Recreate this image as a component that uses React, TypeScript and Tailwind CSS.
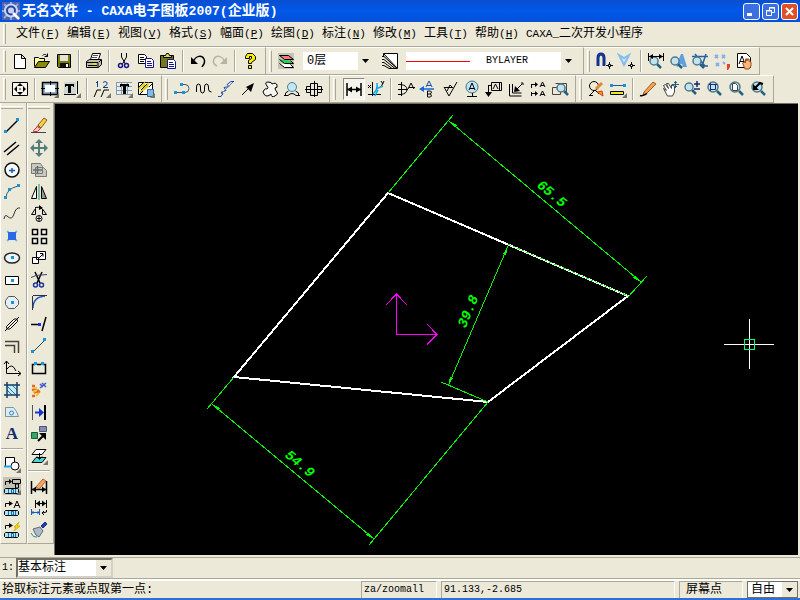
import React from "react";

type StrokeProps = { d: string; c?: string; f?: string; w?: number };

const P: React.FC<StrokeProps> = ({ d, c = "#000", f = "none", w = 1 }) => (
  <path d={d} stroke={c} fill={f} strokeWidth={w} />
);

const Lens: React.FC<{ x?: number; y?: number; r?: number }> = ({ x = 8, y = 7, r = 5 }) => (
  <>
    <path d={`M${x + r - 1} ${y + r - 1}l4 4`} stroke="#246080" strokeWidth="2.5" />
    <circle cx={x} cy={y} r={r} fill="#c3e4ee" stroke="#52798a" strokeWidth="1.5" />
  </>
);

const Corner = () => <path d="M18 13v5h-5z" fill="#77766c" />;

const Dots: React.FC<{ at: number[][] }> = ({ at }) => (
  <>
    {at.map(([x, y]) => (
      <rect key={`${x}-${y}`} x={x} y={y} width="3" height="3" fill="#1495df" />
    ))}
  </>
);

const BlockTag = () => (
  <>
    <P d="M2.5 11.5h12l1 1v3l-1 1h-12l-1-1v-3z" f="#a9e3fa" />
    <P d="M5.5 12v4M8.5 12v4h2v-3.5h-2M12.5 12v4" c="#1172a4" />
  </>
);

const icons: Record<string, React.ReactNode> = {
  // standard
  new: <P d="M3.5 2.5h7l4 4v10h-11zM10.5 2.5v4h4" f="#fff" />,
  open: (
    <>
      <P d="M1.5 14.5v-9h4l1 1h5v3" f="#ffffa0" />
      <P d="M1.5 15.5l4-6h11l-4 6z" f="#8c8a00" />
      <P d="M9.5 3.5c2-2 4-1 5 1m0-3v3h-3" />
    </>
  ),
  save: (
    <>
      <P d="M2.5 2.5h13v13h-12l-1-1z" f="#777a10" />
      <path d="M5 3h8v6H5z" fill="#e5e4d3" />
      <path d="M5 11h9v4H5z" fill="#111" />
      <path d="M11 12h2v3h-2z" fill="#fff" />
    </>
  ),
  print: (
    <>
      <P d="M5.5 7.5l2-6h8l-2 6" f="#fff" />
      <P d="M8 3.5h5M7 5.5h5" c="#555" />
      <P d="M1.5 9.5l3-2h12v5l-3 3h-12z" f="#bdbdad" />
      <P d="M2 10.5h11v5M3 13.5h9M14 10l2-2" />
      <path d="M8 11h3v2H8z" fill="#e9e900" />
    </>
  ),
  cut: (
    <>
      <P d="M6.5 1v4l4 7M11.5 1v4l-4 7" />
      <circle cx="5.5" cy="13.5" r="2" fill="none" stroke="#15158c" strokeWidth="1.5" />
      <circle cx="11.5" cy="13.5" r="2" fill="none" stroke="#15158c" strokeWidth="1.5" />
    </>
  ),
  copy: (
    <>
      <P d="M1.5 2.5h6l2 2v7h-8z" f="#fff" />
      <P d="M3 5.5h4M3 7.5h5M3 9.5h4" />
      <P d="M8.5 6.5h6l2 2v7h-8z" f="#fff" c="#15158c" />
      <P d="M10 9.5h4M10 11.5h5M10 13.5h5" c="#15158c" />
    </>
  ),
  paste: (
    <>
      <P d="M1.5 3.5h13v12h-13z" f="#77761a" />
      <P d="M4.5 5.5v-2h2l1-2h2l1 2h2v2z" f="#d9d85b" />
      <P d="M8.5 7.5h6l2 2v7h-8z" f="#fff" c="#15158c" />
      <P d="M10 10.5h4M10 12.5h5M10 14.5h5" c="#15158c" />
    </>
  ),
  undo: (
    <>
      <path d="M2 5v7h7z" />
      <P d="M4 10c3-7 9-7 11-3s-1 6-2 8" w={1.5} />
    </>
  ),
  redo: (
    <>
      <path d="M16 5v7H9z" fill="#b5b3a6" />
      <P d="M14 10C11 3 5 3 3 7s1 6 3 7" c="#b5b3a6" w={1.5} />
    </>
  ),
  help: (
    <>
      <P d="M4.5 6.5v-2l2-3h5l3 3v3l-4 3v1h-3v-3l3-2v-2h-2v2z" f="#fff000" />
      <P d="M7.5 13.5h3v3h-3z" f="#fff000" />
    </>
  ),
  layers: (
    <>
      <path d="M1 1h16v16H1z" fill="#c5c3b6" />
      <P d="M2.5 3.5h9l5 4h-9z" f="#fb7878" />
      <P d="M2.5 7.5l5 4h9l-3-3" f="#21d24a" />
      <P d="M2.5 11.5l5 4h9l-3-3" f="#fff" />
    </>
  ),
  lineStyle: (
    <>
      <P d="M2.5 1.5h14v15z" f="#fff" />
      <P d="M1 4.5h2l13 12M1 7.5h2l11 9M1 10.5h2l8 6M1 13.5h2l5 3h8M2.5 2v3" />
    </>
  ),
  magnet: (
    <>
      <P d="M3 14V6q0-4 3-4t3 4v8" c="#12348f" w={3} />
      <P d="M11 13.5h7M14.5 10v7" />
      <P d="M13.5 12.5h2v2h-2z" f="#fff" />
    </>
  ),
  snapPoint: (
    <>
      <P d="M2 3l5 10 5-10-5 3z" c="#86bdec" f="#c8e7ff" w={2} />
      <P d="M11 13.5h7M14.5 10v7" />
      <P d="M13.5 12.5h2v2h-2z" f="#fff" />
    </>
  ),
  dimQuery: (
    <>
      <Lens x={7} y={9} r={4} />
      <P d="M1.5 1v8M16.5 1v8M2 4.5h14" />
      <path d="M2 4.5l4-2.5v5zM16 4.5l-4-2.5v5z" />
    </>
  ),
  textQuery: (
    <>
      <path d="M7 14l5-12h2l4 13h-4l-1-3h-3l-1 3z" fill="#5f9fe2" />
      <Lens x={6} y={9} r={4} />
    </>
  ),
  symbolQuery: (
    <>
      <P d="M1 4.5h16M4 2l10 12M15 2l-4 12h6" c="#2461a5" w={1.5} />
      <Lens x={6} y={9} r={4} />
    </>
  ),
  points: (
    <>
      <P d="M2 3l3 3M5 3L2 6M9 3l3 3M12 3L9 6M3 11l3 3M6 11l-3 3M10 10l2 2" c="#85aeea" w={2} />
      <path d="M14 12h3v3l-2 3h-1z" fill="#e74322" />
    </>
  ),
  handPage: (
    <>
      <P d="M2.5 1.5h9l4 4v10h-13z" f="#fff" />
      <P d="M4 12L7 4l3 8M5 9.5h4" />
      <P d="M7.5 11l2-1 1 1v-4h1.5v2V7h2v2l2 1v4l-2 3h-4z" c="#9d4b18" f="#fab779" />
    </>
  ),
  // sheet
  frameMove: (
    <>
      <P d="M1.5 2.5h15v13h-15z" f="#f5f5ed" />
      <path d="M9 3l3 3H6zM9 15l3-3H6zM3 9l3-3v6zM15 9l-3-3v6z" />
      <path d="M8 8h2v2H8z" fill="#888" />
    </>
  ),
  frame: (
    <>
      <P d="M1.5 2.5h15v12h-15z" f="#8fb0cf" w={1.5} />
      <path d="M4 5h10v7H4z" fill="#fff" />
      <P d="M9.5 1v4M9.5 12v4M0 8.5h4M14 8.5h4" />
      <Corner />
    </>
  ),
  textFrame: (
    <>
      <path d="M1 2h12v12H1z" fill="#cdd6d5" />
      <path d="M2 4h9v3h-1V6H8v7H5V6H3v1H2z" />
      <P d="M1 14.5h12M14.5 1v13" />
      <Corner />
    </>
  ),
  serial: (
    <>
      <P d="M2 15l2-5h4M9 15l2-5h5M2 15l-1 2M9 15l-1 2" />
      <P d="M4.5 1v6M3 2.5h1M10 2.5l2-1 2 1v2l-4 3h5" c="#10408a" />
      <Corner />
    </>
  ),
  table: (
    <>
      <path d="M1 2h16v13H1z" fill="#e8edf0" />
      <P d="M1 2.5h16M1 6.5h16M1 10.5h16M1 14.5h16M1.5 2v13M6.5 2v13M12.5 2v13" c="#8a9ba3" />
      <path d="M5 4h9v3h-1V6h-2v8H8V6H6v1H5z" />
      <Corner />
    </>
  ),
  library: (
    <>
      <P d="M1.5 2.5h14v12h-14z" f="#fff" />
      <P d="M2 9l5-5v4l5-5M3 12l9-6" c="#e4d020" w={2} />
      <P d="M2 7l4-4M4 10l6-6M3 14l3-3M12 7l3-3" />
      <P d="M10.5 9.5h6v7h-6z" c="#2466a4" f="#88b9e3" />
      <Corner />
    </>
  ),
  // drawing, advanced
  pline: (
    <>
      <P d="M2 12.5h9M9 4.5h3q4 0 4 4t-4 4" c="#3a5c6a" />
      <Dots at={[[1, 11], [7, 3], [9, 11]]} />
    </>
  ),
  wave: <P d="M1.5 12V7q0-3 2-3t2 3v3q0 3 2 3t2-3V7q0-3 2-3t2 3v2q0 3 3 3" />,
  breakLine: (
    <>
      <P d="M1 16.5h3l2-3-2-1 5-2-2-3 5-1-2-2 4-3h3" c="#1746b4" />
      <P d="M4 14l12-12" c="#6b7aa8" />
    </>
  ),
  arrow: (
    <>
      <P d="M3 15l8-8" />
      <path d="M15 3l-3 9-5-5z" />
    </>
  ),
  gear: (
    <P
      d="M6 6Q3 2 7 2t4 2q4-2 5 1t-2 3q0 2 2 4t-2 4-4-2q-2 2-4 2t-3-2q-2-2 0-4t3-1q2-1 0-3z"
      f="#f5f5ed"
    />
  ),
  circleBase: (
    <>
      <circle cx="9" cy="7" r="4.5" fill="#c1e6f4" stroke="#438199" />
      <P d="M2.5 16v-3l3-2M15.5 16v-3l-3-2M1 15.5h4q4-4 8 0h4" />
    </>
  ),
  hole: <P d="M0 9.5h18M5.5 3.5h7v12h-7zM1.5 6.5h4v6h-4zM12.5 6.5h4v6h-4zM9.5 1v16" />,
  // dimension
  dim: (
    <>
      <P d="M2 3v13M16 3v13M2 9.5h14" w={1.5} />
      <path d="M2 9.5l5-3v6zM16 9.5l-5-3v6z" />
    </>
  ),
  coordDim: (
    <>
      <P d="M5.5 2v14M1 14.5h13M1 5l3 3M4 5L1 8M14 1l2 3M17 1l-3 6" />
      <P d="M6 14q5-4 4-11M9 9l7-3M8 16l3-6" c="#16a7e6" w={1.5} />
    </>
  ),
  chamfer: <P d="M4.5 2v14M1 4.5h3q6 1 6 5t-6 5H1M1 9.5h10M11 9l3-6 3 6M12 7.5h6" />,
  datum: (
    <>
      <P d="M4 9h11" c="#1466e5" w={1.5} />
      <path d="M0 9l5-3v6z" fill="#1466e5" />
      <P d="M7 7l3-6 3 6M8 5.5h4" c="#1552a5" />
      <P d="M8.5 11v6h3l1-1-1-2h-3M11.5 14l1-2-1-1h-3" />
    </>
  ),
  rough: <P d="M3 7.5h9M3 7l5 9L16 2M6 11l3-6 3 3" />,
  weld: (
    <>
      <circle cx="9" cy="7" r="6" fill="#c3e4ee" stroke="#3a7994" />
      <P d="M6 10l3-7 3 7M7 8.5h4M9.5 13v3M4 16.5h10" />
    </>
  ),
  refBox: (
    <>
      <P d="M6.5 2.5h10v8h-10zM14.5 2.5v8M8 9l2.5-5L13 9M3.5 5.5v8M3 5.5h3" />
      <path d="M0 12h7l-3.5 5z" />
    </>
  ),
  edge: (
    <>
      <P d="M2.5 4v12h12M5.5 4v9h9M9 10l6-6h2M15 4V2" />
      <path d="M7 12l1-6 5 5z" />
    </>
  ),
  cutView: (
    <>
      <P d="M2.5 4v4M2 4.5h5M2.5 12v4M2 13.5h5M11 7l2.5-5L16 7M11 16l2.5-5 2.5 5M12 5.5h3M12 14.5h3" />
      <path d="M6 2v5l3-2.5zM6 11v5l3-2.5z" />
    </>
  ),
  boxQuery: (
    <>
      <P d="M1.5 7.5h8v7h-8zM4.5 3.5h11v9" c="#444" />
      <Lens x={10} y={8} r={4} />
    </>
  ),
  // view
  edit: (
    <>
      <circle cx="7" cy="6" r="4.5" fill="#f4ecd4" stroke="#000" />
      <P d="M9 9l6-6" c="#de8a36" w={3} />
      <P d="M3 15l5-5 4 4M2 15.5h4" />
      <P d="M10 12l6 4-1-5z" c="#d03914" f="#f5a022" />
    </>
  ),
  ruler: (
    <>
      <P d="M4 5.5h10" c="#185ab1" />
      <Dots at={[[1, 4], [14, 4]]} />
      <P d="M1.5 11.5h13v3h-13z" f="#efe72c" />
      <Corner />
    </>
  ),
  pencil: (
    <>
      <P d="M5 12L14 2l3 2-9 9-4 2z" c="#a05a20" f="#f3a553" />
      <P d="M1 15.5q3 1 7-2" w={1.5} />
    </>
  ),
  pan: (
    <>
      <P d="M2.5 8.5l3 2-3-5 2-1 3 4-2-5h2l3 5V5l3 1v6l-2 4h-5z" f="#fff" c="#444" />
      <P d="M11 4.5h7M14.5 1v7M13 2.5h3M13 6.5h3" c="#225b83" />
    </>
  ),
  zoomPlus: (
    <>
      <Lens x={6} y={7} r={4} />
      <P d="M11 4h6M14 1v6M11 9h6" c="#172870" w={1.5} />
    </>
  ),
  zoomWindow: (
    <>
      <Lens />
      <P d="M5.5 4.5h5v5h-5zM4 4.5h8M5.5 3v8" c="#182b83" />
    </>
  ),
  zoomPage: (
    <>
      <Lens />
      <P d="M5.5 3.5h3l2 2v5h-5z" f="#fff" c="#444" />
    </>
  ),
  zoomBack: (
    <>
      <Lens />
      <P d="M6 8l5-5 3 1" w={2} />
      <path d="M4 4v6h6z" />
    </>
  ),
  // drawing
  line: (
    <>
      <P d="M3 15L15 3" w={1.5} />
      <Dots at={[[1, 13], [13, 1]]} />
    </>
  ),
  parallel: <P d="M1 13L13 3M4 16L16 6" w={1.5} />,
  circle: (
    <>
      <circle cx="9" cy="9" r="7" fill="#f5faff" stroke="#111" strokeWidth="1.5" />
      <P d="M6 9.5h6M9 7v5" c="#225aae" w={1.5} />
    </>
  ),
  arc: (
    <>
      <P d="M3 15q0-9 12-12" c="#405a70" />
      <Dots at={[[1, 13], [5, 5], [14, 1]]} />
    </>
  ),
  spline: <P d="M1 14q1-5 3-3 5 5 7-2t6-6" c="#333" />,
  point: (
    <>
      <P d="M4 4l10 10M14 4L4 14" c="#6db9f5" w={2} />
      <path d="M5 5h8v8H5z" fill="#2a6be3" />
    </>
  ),
  ellipse: (
    <>
      <ellipse cx="9" cy="9" rx="7.5" ry="5" fill="#edf5fa" stroke="#222" strokeWidth="1.5" />
      <Dots at={[[8, 7]]} />
    </>
  ),
  rect: (
    <>
      <P d="M2.5 5.5h13v8h-13z" f="#fff" />
      <Dots at={[[8, 8]]} />
    </>
  ),
  polygon: (
    <>
      <P d="M5.5 3.5h6l4 4v4l-4 4h-6l-3-4v-4z" f="#e7edf0" c="#4b5b65" />
      <Dots at={[[8, 8]]} />
    </>
  ),
  slot: (
    <>
      <P d="M3.5 11.5l7-7q4-2 4 2l-7 7q-4 2-4-2z" f="#f3f2ea" />
      <P d="M2 16L16 2" />
    </>
  ),
  offset: <P d="M2 4.5h13.5V16M2 8.5h9.5V16" c="#45443e" w={1.5} />,
  curve: <P d="M3.5 2v12.5h14M1 5l2.5-3L6 5M15 12l3 2.500-3 2.500M4 10q5-7 9 2" />,
  hatch: (
    <>
      <path d="M3 3h12v12H3z" fill="#c6e9f4" />
      <P d="M4 9l5 5M4 5l9 9M9 4l5 5" c="#1d78ac" />
      <P d="M4 1v16M14 1v16M1 4h16M1 14h16" c="#173c63" w={1.5} />
    </>
  ),
  region: (
    <>
      <P d="M2.5 4.5h8l3 4 2 5h-13z" f="#dfebf0" c="#7995a0" />
      <circle cx="8.5" cy="10" r="2" fill="none" stroke="#218dc0" />
    </>
  ),
  text: (
    <text x="9" y="14" textAnchor="middle" className="font-['Liberation_Serif',serif] text-[17px] leading-4 font-bold" fill="#15296b">
      A
    </text>
  ),
  block: (
    <>
      <P d="M2.5 2.5h9v9h-9z" f="#fff" />
      <circle cx="12" cy="11" r="4" fill="#fff" stroke="#000" />
      <P d="M1 11.5h8" c="#19a5e6" w={2} />
      <Corner />
    </>
  ),
  sheetBlock: (
    <>
      <path d="M0 0h18v18H0z" fill="#c5c3b6" />
      <P d="M2.5 8V4.5h5M9.5 2.5h8v4h-8zM12.5 7h3v4h-3z" />
      <path d="M6 2l3 2.5L6 7z" />
      <BlockTag />
      <Corner />
    </>
  ),
  textBlock: (
    <>
      <P d="M2.5 8V4.5h5M11 9l3-7 3 7M12 6.5h4" />
      <path d="M6 2l4 2.5L6 7z" />
      <BlockTag />
    </>
  ),
  flashBlock: (
    <>
      <P d="M2.5 8V4.5h5" />
      <path d="M6 2l4 2.5L6 7z" />
      <path d="M16 1l-5 5h2l-2 4 6-5h-3z" fill="#f4df14" stroke="#d8b406" />
      <BlockTag />
    </>
  ),
  // modify
  erase: (
    <>
      <P d="M8 8l6-7 3 2-6 8z" f="#f6ce47" c="#8b5b20" />
      <P d="M7 9l3 3" c="#4a6bb0" w={2} />
      <P d="M3.5 13.5l4-4 3 2-3 3h-4z" f="#f9c5bd" c="#c33" />
      <P d="M1 15.5h15" c="#444" />
    </>
  ),
  move: (
    <>
      <P d="M2 9h14M9 2v14" c="#527f7d" w={2} />
      <path d="M9 0l4 4H5zM9 18l4-4H5zM0 9l4-4v8zM18 9l-4-4v8z" fill="#527f7d" />
    </>
  ),
  duplicate: (
    <>
      <P d="M1.5 2.5h9l2 3v7h-11zM5.5 6.5h8l3 3v6h-11z" c="#7b7b75" f="#cac9c0" />
      <P d="M3 9h9M7.5 5v8" c="#5e716d" w={1.5} />
    </>
  ),
  mirror: (
    <>
      <P d="M1.5 15.5h5v-12z" f="#fff" />
      <P d="M16.5 15.5h-5v-12z" f="#999" />
      <P d="M9 1v16" c="#16956c" />
    </>
  ),
  rotate: (
    <>
      <circle cx="9" cy="13.5" r="3" fill="#fff" stroke="#000" />
      <P d="M7 13.5h4M9 11v5M1.5 9.5h4v-6zM12.5 4l4 5.5h-4zM5 2.5q4-1 7 1" />
      <path d="M9 0l4 3-4 2z" />
    </>
  ),
  array: <P d="M2.5 2.5h5v5h-5zM11.5 2.5h5v5h-5zM2.5 11.5h5v5h-5zM11.5 11.5h5v5h-5z" f="#f7f6ee" w={1.5} />,
  scale: (
    <>
      <P d="M6.5 2.5h9v8h-9zM2.5 8.5h6v6h-6z" f="#fff" />
      <P d="M9 9l4-4M10 4.5h3v3" />
    </>
  ),
  trim: (
    <>
      <P d="M5 1l5 11M12 1L7 12" w={1.5} />
      <P d="M1 6.5l5-2 11-1" c="#446" />
      <circle cx="5.5" cy="14" r="2" fill="none" stroke="#1c379d" strokeWidth="1.5" />
      <circle cx="11.5" cy="14" r="2" fill="none" stroke="#1c379d" strokeWidth="1.5" />
    </>
  ),
  fillet: (
    <>
      <P d="M3 15q0-11 12-12" c="#1f58c6" w={1.5} />
      <P d="M2.5 3v14M3 2.5h14" c="#333" />
    </>
  ),
  extend: (
    <>
      <P d="M1 9.5h8M12 16l4-14" w={1.5} />
      <path d="M8 8h3v3H8z" fill="#1c35e0" />
    </>
  ),
  stretchLine: (
    <>
      <P d="M3 15L15 3" c="#244c49" />
      <Dots at={[[1, 13], [13, 1]]} />
    </>
  ),
  breakAt: (
    <>
      <P d="M5 5.5H2.5v9h13v-9H13M7 5.5h4" w={1.5} />
      <Dots at={[[4, 3], [11, 3]]} />
    </>
  ),
  explode: (
    <>
      <P d="M2 5h3M2 9l5-1M4 12l5-3M2 15h3M7 12l3-2" c="#e26b24" w={2.5} />
      <P d="M4 7h3M3 11l4-2M6 15l3-3" c="#f1c233" w={2} />
      <P d="M10 7l6-5M12 2l4 4M10 3l3 3" c="#3f5cce" w={1.5} />
    </>
  ),
  align: (
    <>
      <P d="M2.5 2v15" c="#555" />
      <P d="M15 2v15" w={2} />
      <P d="M5 9.5h5" c="#1636d1" w={2} />
      <path d="M9 5l5 4.5-5 4.5z" fill="#1636d1" />
    </>
  ),
  convert: (
    <>
      <P d="M9.5 1.5h7v5h-7z" c="#556" f="#808eb9" />
      <P d="M1.5 7.5h6v6h-6z" c="#185c3c" f="#35a56c" />
      <P d="M8 16l5-5" w={2} />
      <path d="M16 8v7l-7-7z" />
    </>
  ),
  layerCopy: (
    <>
      <P d="M6 2.5h10l-4 5H2z" f="#fff" />
      <P d="M6 10.5h10l-4 5H2z" f="#48d7dc" />
      <P d="M9.5 6v6M7 9.5l2.5 3 2.5-3" />
      <Corner />
    </>
  ),
  dimEdit: (
    <>
      <P d="M1.5 4v13M16.5 4v13M2 12.5h14" w={1.5} />
      <path d="M2 12.5l4-3v6zM16 12.5l-4-3v6z" />
      <P d="M6 10l7-8 3 2-7 8z" f="#f6a866" c="#b75b27" />
    </>
  ),
  dimMove: (
    <>
      <P d="M5.5 1v8M16.5 1v8M6 4.5h10" />
      <path d="M6 4.5l4-3v6zM16 4.5l-4-3v6z" />
      <P d="M1.5 10v6M9.5 10v6M2 13.5h7M3 12v3M8 12v3" c="#1461b8" />
      <P d="M16.5 11v2l-4 1M14 12l-2 2 2 2" />
    </>
  ),
  brush: (
    <>
      <P d="M11 5l4-4 2 2-4 4z" c="#172d84" f="#2141ad" />
      <P d="M3 8l7-2 3 4-4 6-3-2z" c="#667" f="#a8bdc7" />
      <P d="M1 12q2 5 6 4" c="#3d85a9" />
    </>
  ),
};

const ToolButton: React.FC<{ name: string; pressed?: boolean }> = ({ name, pressed }) => (
  <button
    type="button"
    aria-label={name}
    className={
      pressed
        ? "flex h-[22px] w-[22px] shrink-0 items-center justify-center border border-t-[#8e8c7e] border-l-[#8e8c7e] border-r-white border-b-white bg-[#f5f4ec]"
        : "flex h-[22px] w-[22px] shrink-0 items-center justify-center hover:bg-[#f5f4ec]"
    }
  >
    <svg width="18" height="18" viewBox="0 0 18 18" className="shrink-0" aria-hidden="true">
      {icons[name]}
    </svg>
  </button>
);

const Tools: React.FC<{ items: string[]; vertical?: boolean }> = ({ items, vertical }) => (
  <>
    {items.map((name, i) =>
      name === "|" ? (
        <span
          key={i}
          className={
            vertical
              ? "my-[3px] h-[2px] w-[22px] shrink-0 border-t border-[#aca899] bg-white"
              : "mx-[3px] h-[22px] w-[2px] shrink-0 border-l border-[#aca899] bg-white"
          }
        />
      ) : (
        <ToolButton key={i} name={name} pressed={name === "dim"} />
      )
    )}
  </>
);

const Bar: React.FC<{ children: React.ReactNode }> = ({ children }) => (
  <div className="flex h-7 shrink-0 items-center border-t border-r border-b border-t-white border-r-[#aca899] border-b-[#aca899] pr-1">
    <span className="mx-[3px] h-[22px] w-[3px] shrink-0 border-t border-r border-l border-t-white border-r-[#aca899] border-l-white" />
    {children}
  </div>
);

const SideBar: React.FC<{ items: string[] }> = ({ items }) => (
  <div className="flex w-[27px] shrink-0 flex-col items-center self-start border-r border-b border-l border-r-[#aca899] border-b-[#aca899] border-l-white pr-1 pb-[2px]">
    <span className="mt-[3px] mb-[6px] h-[3px] w-[22px] shrink-0 border-t border-b border-t-white border-b-[#aca899]" />
    <Tools items={items} vertical />
  </div>
);

const DropArrow = () => (
  <span className="pointer-events-none flex h-full w-[15px] shrink-0 items-center justify-center bg-[#ece9d8]">
    <svg width="7" height="4" viewBox="0 0 7 4" aria-hidden="true">
      <path d="M0 0h7L3.5 4z" />
    </svg>
  </span>
);

const menus = [
  ["文件", "F"],
  ["编辑", "E"],
  ["视图", "V"],
  ["格式", "S"],
  ["幅面", "P"],
  ["绘图", "D"],
  ["标注", "N"],
  ["修改", "M"],
  ["工具", "T"],
  ["帮助", "H"],
];

const TitleBar = () => (
  <header className="flex h-[22px] shrink-0 items-center bg-gradient-to-b from-[#0a4fd0] via-[#0058ea] to-[#0450d8] pr-[2px] pl-[2px] text-white">
    <svg width="18" height="18" viewBox="0 0 18 18" aria-hidden="true">
      <path d="M0 0h18v18H0z" fill="#4a62b0" />
      <path d="M2 2l14 14M16 2L2 16M9 0v18M0 9h18" stroke="#93a5dc" strokeWidth="2" />
      <circle cx="9" cy="8.5" r="7" fill="#c9d4f2" />
      <circle cx="9" cy="8.5" r="4" fill="#c9d4f2" stroke="#2b449c" strokeWidth="2" />
      <path d="M11 11l6 6" stroke="#fff" strokeWidth="2.5" />
    </svg>
    <h1 className="ml-[2px] flex-1 truncate text-[14px] leading-5 font-bold">
      无名文件<span className="text-[13px] whitespace-pre"> - CAXA</span>电子图板<span className="text-[13px]">2007(</span>企业版
      <span className="text-[13px]">)</span>
    </h1>
    <div className="flex gap-[2px]">
      <button type="button" aria-label="最小化" className="flex h-[17px] w-[17px] items-center justify-center rounded-[3px] border border-white bg-[#3c6fe0]">
        <svg width="11" height="11" viewBox="0 0 11 11"><path d="M1 7h5v3H1z" fill="#fff" /></svg>
      </button>
      <button type="button" aria-label="还原" className="flex h-[17px] w-[17px] items-center justify-center rounded-[3px] border border-white bg-[#3c6fe0]">
        <svg width="11" height="11" viewBox="0 0 11 11">
          <path d="M4.5 4V1.5h5v5H7M1.5 4.5h5v5h-5zM4 2h6M1 5h6" stroke="#fff" fill="none" />
        </svg>
      </button>
      <button type="button" aria-label="关闭" className="flex h-[17px] w-[17px] items-center justify-center rounded-[3px] border border-white bg-[#df4f28]">
        <svg width="11" height="11" viewBox="0 0 11 11"><path d="M2 2l7 7M9 2L2 9" stroke="#fff" strokeWidth="2" /></svg>
      </button>
    </div>
  </header>
);

const Drawing = () => (
  <svg
    className="h-full w-full"
    viewBox="55 104 743 451"
    preserveAspectRatio="xMinYMin meet"
    fill="none"
    shapeRendering="crispEdges"
  >
    <path d="M388 193L628 296L488 402L234 377Z" stroke="#fff" strokeWidth="2" />
    <g stroke="#00ff00">
      <path d="M388 193L453 115M449 121L641 282M628 297L647 276" />
      <path d="M508 244L628 296" strokeDasharray="3 2" />
      <path d="M508 246L448 386M441 382L488 402" />
      <path d="M234 377L207 409M212 404L374 539M488 402L369 545" />
    </g>
    <path
      d="M449 121l8 4-2 3zM641 282l-8-4 2-3zM508 246l-2 9-3-1zM448 386l2-9 3 1zM212 404l8 4-2 3zM374 539l-8-4 2-3z"
      fill="#00ff00"
    />
    <path d="M396.5 334.5v-40M386 305l10.5-11 10.5 11M396.5 334.5h40M427 324l10 10.5-10 10" stroke="#ff00ff" />
    <path d="M749.5 319v50M724 344.5h50" stroke="#fff" />
    <path d="M744.5 339.5h10v10h-10z" stroke="#00ff80" />
    <g className="text-[14px] font-bold italic" fill="#00ff00" textAnchor="middle">
      <text transform="translate(549 197) rotate(40)">65.5</text>
      <text transform="translate(297 467) rotate(40)">54.9</text>
      <text transform="translate(472 313) rotate(-67)">39.8</text>
    </g>
  </svg>
);

const App: React.FC = () => {
  return (
    <div className="flex h-screen flex-col overflow-hidden border-b-2 border-[#2f6fd6] bg-[#ece9d8] font-['Liberation_Mono','Noto_Sans_CJK_SC',monospace] text-[12px] leading-4 text-black">
      <TitleBar />

      <nav className="flex h-[25px] shrink-0 items-center border-b border-[#aca899]">
        <span className="mx-[3px] h-[20px] w-[3px] shrink-0 border-r border-l border-r-[#aca899] border-l-white" />
        <div className="ml-[7px] flex gap-[7px] whitespace-nowrap">
          {menus.map(([label, key]) => (
            <button key={key} type="button" className="w-11 text-left">
              {label}
              <span className="text-[11px]">
                (<u>{key}</u>)
              </span>
            </button>
          ))}
          <button type="button">
            <span className="text-[11px]">CAXA_</span>二次开发小程序
          </button>
        </div>
      </nav>

      <div className="flex shrink-0">
        <Bar>
          <Tools items={["new", "open", "save", "|", "print", "|", "cut", "copy", "paste", "|", "undo", "redo", "|", "help"]} />
        </Bar>
        <Bar>
          <Tools items={["layers"]} />
          <div className="ml-[6px] flex h-[18px] w-[70px] items-center bg-white">
            <select aria-label="图层" className="h-full min-w-0 flex-1 appearance-none pl-1">
              <option>0层</option>
            </select>
            <DropArrow />
          </div>
          <span className="w-[6px]" />
          <Tools items={["lineStyle"]} />
          <div className="ml-[5px] flex h-[18px] w-[170px] items-center bg-white">
            <span className="w-[64px] shrink-0 border-t border-[#ff0000]" />
            <select aria-label="线型" className="h-full min-w-0 flex-1 appearance-none pl-4 text-[10px]">
              <option>BYLAYER</option>
            </select>
            <DropArrow />
          </div>
          <span className="w-[3px]" />
        </Bar>
        <Bar>
          <Tools items={["magnet", "snapPoint", "|", "dimQuery", "textQuery", "symbolQuery", "points", "handPage"]} />
        </Bar>
      </div>

      <div className="flex shrink-0">
        <Bar>
          <Tools items={["frameMove", "|", "frame", "textFrame", "|", "serial", "table", "library"]} />
        </Bar>
        <Bar>
          <Tools items={["pline", "wave", "breakLine", "arrow", "gear", "circleBase", "hole"]} />
        </Bar>
        <Bar>
          <span className="w-1" />
          <Tools items={["dim", "coordDim", "|", "chamfer", "datum", "rough", "weld", "refBox", "edge", "cutView", "boxQuery"]} />
        </Bar>
        <Bar>
          <Tools items={["edit", "ruler", "|", "pencil", "pan", "zoomPlus", "zoomWindow", "zoomPage", "zoomBack"]} />
        </Bar>
      </div>

      <main className="flex min-h-0 flex-1">
        <SideBar
          items={[
            "line", "parallel", "circle", "arc", "spline", "point", "ellipse", "rect", "polygon", "slot",
            "offset", "curve", "hatch", "region", "text", "|", "block", "sheetBlock", "textBlock", "flashBlock",
          ]}
        />
        <SideBar
          items={[
            "erase", "move", "duplicate", "mirror", "rotate", "array", "scale", "trim", "fillet", "extend",
            "stretchLine", "breakAt", "explode", "align", "convert", "layerCopy", "|", "dimEdit", "dimMove", "brush",
          ]}
        />
        <div className="mr-[2px] min-w-0 flex-1 border-t border-l border-[#716f64] bg-black">
          <Drawing />
        </div>
      </main>

      <div className="mt-[2px] flex h-[22px] shrink-0 items-center border-t border-b border-t-[#aca899] border-b-[#aca899]">
        <label htmlFor="dimKind" className="w-4 shrink-0 pl-[2px] text-[10px]">
          1:
        </label>
        <div className="flex h-5 w-[97px] items-center border-2 border-t-[#716f64] border-r-[#d4d0c8] border-b-[#d4d0c8] border-l-[#716f64] bg-white">
          <select id="dimKind" className="h-full min-w-0 flex-1 appearance-none">
            <option>基本标注</option>
          </select>
          <DropArrow />
        </div>
      </div>

      <footer className="flex h-[19px] shrink-0 items-center gap-1 border-t-2 border-white">
        <p className="min-w-0 flex-1 truncate pl-[2px]">拾取标注元素或点取第一点:</p>
        <p className="h-full w-[76px] shrink-0 border-t border-r border-l border-t-[#aca899] border-r-white border-l-[#aca899] pl-[2px] text-[10px]">
          za/zoomall
        </p>
        <p className="h-full w-[234px] shrink-0 border-t border-r border-l border-t-[#aca899] border-r-white border-l-[#aca899] pl-[2px] text-[10px]">
          91.133,-2.685
        </p>
        <p className="h-full w-[64px] shrink-0 border-t border-r border-l border-t-[#aca899] border-r-white border-l-[#aca899] pl-[6px]">
          屏幕点
        </p>
        <div className="mr-[2px] flex h-full w-[51px] shrink-0 items-center border border-[#716f64] bg-white">
          <select aria-label="捕捉方式" className="h-full min-w-0 flex-1 appearance-none pl-[3px]">
            <option>自由</option>
          </select>
          <DropArrow />
        </div>
      </footer>
    </div>
  );
};

export default App;
